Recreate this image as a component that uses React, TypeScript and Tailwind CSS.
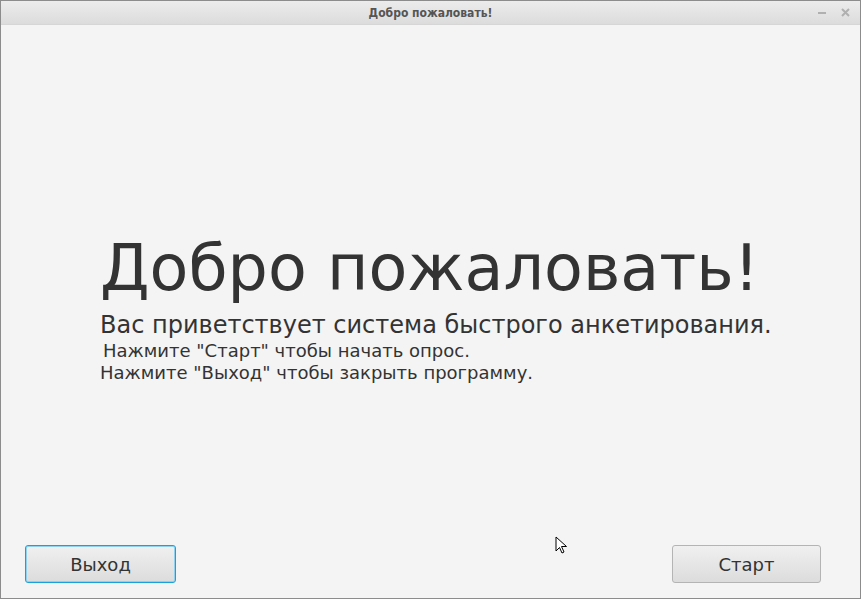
import React from "react";

const FONT = "font-['DejaVu_Sans',sans-serif]";

function TitleBar() {
  return (
    <div className="relative flex h-[24px] items-center justify-center border-b border-[#d6d6d6] bg-gradient-to-b from-[#ececec] to-[#dcdcdc]">
      <span className="font-['DejaVu_Sans_Condensed',sans-serif] text-[12px] font-bold text-[#555]">
        Добро пожаловать!
      </span>
      <div className="absolute right-[10px] top-0 flex h-full items-center gap-[15px]">
        <span className="block h-[2px] w-[8px] bg-[#b0b0b0]" />
        <svg width="9" height="9" viewBox="0 0 9 9">
          <path d="M1 1L8 8M8 1L1 8" stroke="#b0b0b0" strokeWidth="2" />
        </svg>
      </div>
    </div>
  );
}

function Cursor() {
  return (
    <svg
      className="absolute left-[554px] top-[535px]"
      width="14"
      height="20"
      viewBox="0 0 14 20"
    >
      <path
        d="M1 1L1 15L4.5 11.5L7 17L9 16L6.5 10.5L11.5 10.5Z"
        fill="#fff"
        stroke="#000"
        strokeWidth="1"
      />
    </svg>
  );
}

export default function App() {
  return (
    <div className={`relative h-[599px] w-[861px] overflow-hidden border border-[#8c8c8c] bg-[#f4f4f4] ${FONT}`}>
      <TitleBar />
      <div className="flex h-[574px] flex-col">
        <div className="flex flex-1 flex-col pl-[99px] pt-[203px] text-[#333]">
          <h1 className="text-[63.5px] leading-[80px]">Добро пожаловать!</h1>
          <p className="mt-[2px] text-[24px] leading-[30px]">
            Вас приветствует система быстрого анкетирования.
          </p>
          <p className="ml-[3px] text-[18px] leading-[22px]">
            Нажмите "Старт" чтобы начать опрос.
          </p>
          <p className="text-[18px] leading-[22px]">
            Нажмите "Выход" чтобы закрыть программу.
          </p>
        </div>
        <div className="flex items-center justify-between pl-[24px] pr-[39px] pb-[16px]">
          <button className="h-[38px] w-[151px] rounded-[3px] border border-[#1aa0dc] bg-gradient-to-b from-[#f0f0f0] to-[#dcdcdc] text-[18px] text-[#333] shadow-[inset_0_0_0_1px_#8fd1ef]">
            Выход
          </button>
          <button className="h-[38px] w-[149px] rounded-[3px] border border-[#b4b4b4] bg-gradient-to-b from-[#f0f0f0] to-[#dcdcdc] text-[18px] text-[#333]">
            Старт
          </button>
        </div>
      </div>
      <Cursor />
    </div>
  );
}
